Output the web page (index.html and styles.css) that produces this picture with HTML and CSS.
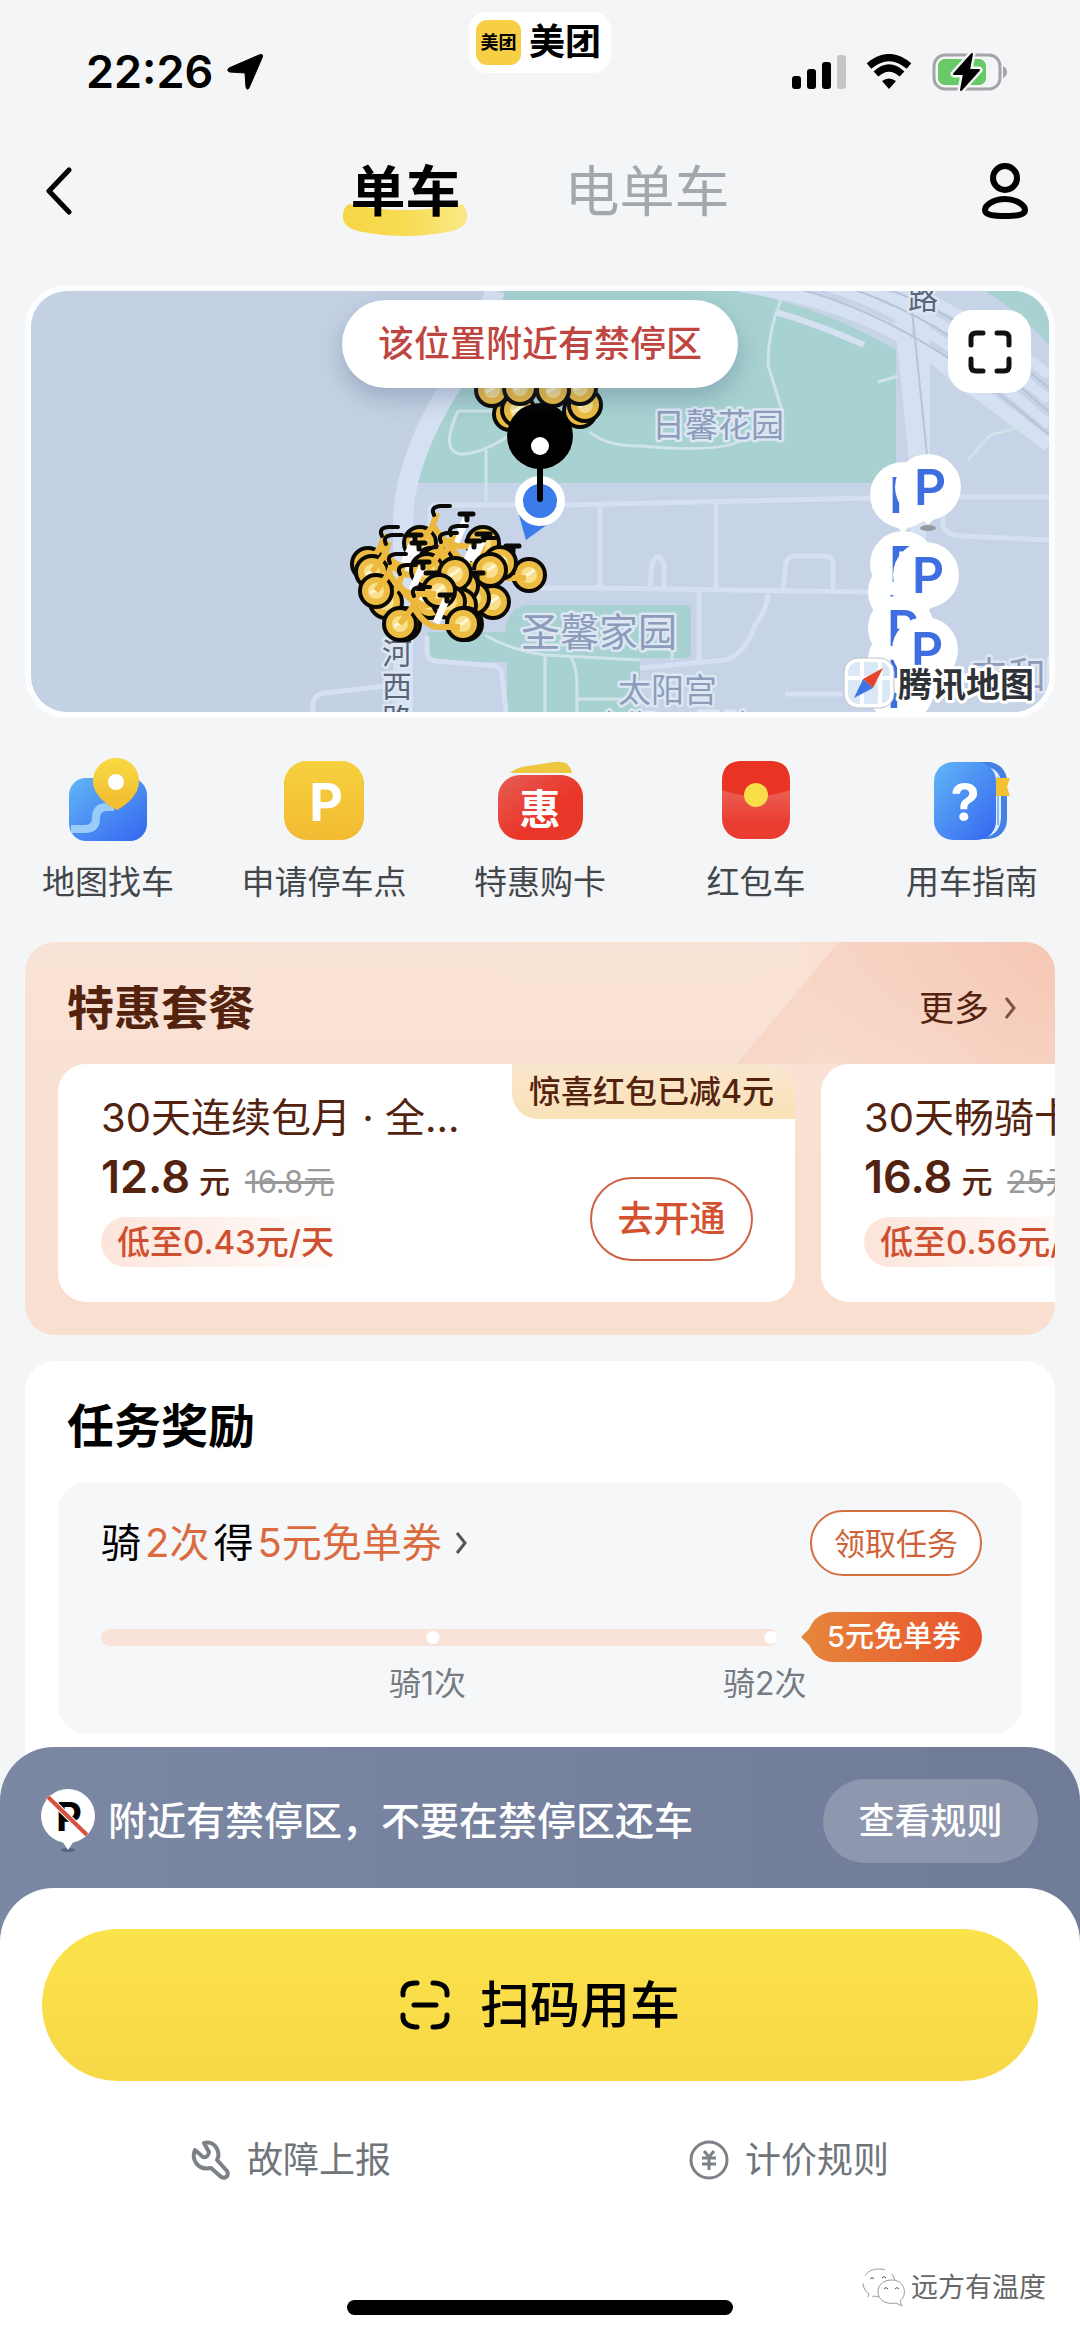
FILE: index.html
```html
<!DOCTYPE html>
<html lang="zh-CN">
<head>
  <meta charset="UTF-8">
  <meta name="viewport" content="width=device-width, initial-scale=1.0">
  <title>美团单车</title>
  <link rel="stylesheet" href="styles.css">
</head>
<body>
  <div class="app">
    <main class="scroll">

      <!-- Status bar -->
      <div class="status">
        <div class="status-left">
          <span class="time">22:26</span>
          <svg width="36" height="36" viewBox="0 0 36 36"><path d="M32 1 Q37 -1 35 4 L22 34 Q20 37 19 33 L18 19 L3 18 Q-1 17 2 14 Z" stroke="#000" stroke-linejoin="round"/></svg>
        </div>
        <div class="status-right">
          <svg width="54" height="36" viewBox="0 0 54 36">
            <rect x="0" y="22" width="9" height="13" rx="3"/>
            <rect x="15" y="15" width="9" height="20" rx="3"/>
            <rect x="30" y="8" width="9" height="27" rx="3"/>
            <rect x="45" y="1" width="9" height="34" rx="3" fill="#c4c5c7"/>
          </svg>
          <svg width="46" height="36" viewBox="0 0 46 36">
            <path d="M3 12 Q23 -5 43 12" fill="none" stroke="#000" stroke-width="7"/>
            <path d="M10 20 Q23 8 36 20" fill="none" stroke="#000" stroke-width="7"/>
            <path d="M16 27 Q23 22 30 27 L23 35 Z"/>
          </svg>
          <svg width="76" height="40" viewBox="0 0 76 40">
            <rect x="2" y="3" width="66" height="34" rx="11" fill="none" stroke="#a3a5a8" stroke-width="3"/>
            <path d="M71 14 Q75 16 75 20 Q75 24 71 26 Z" fill="#a3a5a8"/>
            <rect x="6" y="7" width="48" height="26" rx="7" fill="#67c967"/>
            <path d="M40 2 L22 22 H32 L29 38 L47 18 H37 Z" stroke="#f3f5f7" stroke-width="7" stroke-linejoin="round"/>
            <path d="M40 2 L22 22 H32 L29 38 L47 18 H37 Z" stroke="#000" stroke-width="2" stroke-linejoin="round"/>
          </svg>
        </div>
        <div class="brand"><span class="brand-icon">美团</span><span>美团</span></div>
      </div>

      <!-- Navigation -->
      <nav class="nav">
        <button class="icon-btn" aria-label="返回">
          <svg width="28" height="48" viewBox="0 0 28 48"><path d="M24 3 L4 24 L24 45" fill="none" stroke="#000" stroke-width="5" stroke-linecap="round" stroke-linejoin="round"/></svg>
        </button>
        <div class="tabs">
          <a class="tab active" href="#bike">
            <svg class="smear" width="124" height="32" viewBox="0 0 124 32">
              <defs><linearGradient id="smear" x1="0" x2="1"><stop offset="0" stop-color="#f6d647"/><stop offset="0.5" stop-color="#f7dc52"/><stop offset="1" stop-color="#fae888"/></linearGradient></defs>
              <path d="M6 0 Q62 12 119 0 Q125 6 124 15 Q122 25 104 28 Q62 36 20 28 Q2 25 0 15 Q-1 4 6 0 Z" fill="url(#smear)"/>
            </svg>
            <span>单车</span>
          </a>
          <a class="tab" href="#ebike">电单车</a>
        </div>
        <button class="icon-btn" aria-label="我的">
          <svg width="48" height="58" viewBox="0 0 48 58" fill="none" stroke="#000" stroke-width="6">
            <circle cx="24" cy="16" r="12"/>
            <path d="M24 37 C35 37 44 43 44 48 C44 53 36 54 24 54 C12 54 4 53 4 48 C4 43 13 37 24 37 Z"/>
          </svg>
        </button>
      </nav>

      <!-- Map -->
      <section class="map">
        <svg class="map-canvas" viewBox="31 291 1018 421" preserveAspectRatio="xMidYMid slice">
          <defs>
            <g id="wheel">
              <circle r="16" fill="#edbd43" stroke="#0a0906" stroke-width="4"/>
              <circle r="8" fill="#f8e08e"/>
              <path d="M-6 2 L0 -1 L5 -5" stroke="#fff6d8" stroke-width="3" fill="none"/>
            </g>
            <g id="bike">
              <use href="#wheel"/>
              <use href="#wheel" x="63"/>
              <path d="M0 0 L12 -16 L17 -30 M13 -18 Q24 2 38 3 H60" fill="none" stroke="#edb93c" stroke-width="6"/>
              <path d="M36 -1 L46 -24" stroke="#fff" stroke-width="7"/>
              <path d="M40 -29 H53 M47 -29 V-23" stroke="#0a0906" stroke-width="5" stroke-linecap="round"/>
              <path d="M14 -28 Q10 -36 20 -37 H30" stroke="#0a0906" stroke-width="4" fill="none" stroke-linecap="round"/>
            </g>
            <g id="park">
              <path d="M-8 30 L0 38 L8 30 Z" fill="#fff"/>
              <circle r="33" fill="#fff"/>
              <text class="park-text" x="2" y="18">P</text>
            </g>
          </defs>

          <rect x="31" y="291" width="1018" height="421" fill="#c4d1e3"/>
          <path d="M505 291 H1049 V712 H395 V500 Z" fill="#c7d3e6"/>

          <!-- green areas -->
          <g fill="#a7d2d1">
            <path d="M505 291 H735 Q820 305 896 350 V483 H415 Q425 430 460 390 Z"/>
            <path d="M985 291 H1049 V345 Q1020 312 985 291 Z"/>
            <path d="M428 632 H505 Q508 605 530 605 H685 Q691 605 691 612 V652 Q691 658 685 658 H640 V712 H507 V662 H436 Q428 660 428 652 Z"/>
          </g>

          <!-- roads -->
          <g fill="none" stroke="#d5e0f2">
            <path d="M495 291 Q480 340 448 390 Q405 460 403 520 V712" stroke-width="20"/>
            <path d="M899 285 L918 470 V712 M922 285 V470" stroke-width="16"/>
            <path d="M740 285 Q880 305 955 375 L1049 445" stroke-width="14"/>
            <path d="M800 280 Q910 300 1049 425 M840 280 Q940 310 1049 400 M880 280 Q960 305 1049 375" stroke-width="10"/>
            <path d="M776 312 Q820 325 864 345" stroke-width="6"/>
          </g>
          <g fill="none" stroke="#b7c3d9" stroke-width="2">
            <path d="M770 283 Q900 305 1049 435 M820 280 Q930 305 1049 412 M860 280 Q950 305 1049 388 M910 291 L927 455"/>
          </g>
          <g fill="none" stroke="#d5e0f2" stroke-width="5">
            <path d="M430 602 V510 Q430 505 436 505 H565 L870 498 M950 497 H1049"/>
            <path d="M600 507 V588 M716 504 V588 M699 592 V665 M520 588 H600 L870 592"/>
            <path d="M650 588 L652 565 Q657 548 664 565 V588 M783 590 L786 562 Q788 556 796 556 H825 Q833 556 833 564 V590"/>
            <path d="M768 594 Q766 612 755 625 Q745 655 725 660 L640 668"/>
            <path d="M943 500 V525 Q945 535 960 536 L1049 540 M313 712 V702 Q315 694 325 693 L385 686 M785 694 H850"/>
            <path d="M427 636 V652 Q427 660 436 661 L495 666 Q502 668 502 676 L506 712"/>
          </g>
          <g fill="none" stroke="#cfe3ea" stroke-width="3">
            <path d="M458 411 H520 M458 411 Q440 450 460 454 Q480 455 510 435 M486 450 V505 M590 432 Q605 446 640 446 Q740 455 750 432"/>
            <path d="M781 300 Q768 330 768 365 L782 410 M878 382 L898 376 M485 635 Q510 650 545 655 L640 660 M545 655 V712 M570 656 Q577 665 577 690 V712 M577 699 H640 M672 640 V660 M968 460 L990 435 L1020 427"/>
          </g>

          <!-- place names -->
          <g class="place">
            <text x="652" y="437" font-size="33">日馨花园</text>
            <text x="521" y="646" font-size="39">圣馨家园</text>
            <text x="618" y="702" font-size="33">太阳宫</text>
            <text x="595" y="736" font-size="30">京街 一号院</text>
            <text x="970" y="689" font-size="38">丰和园</text>
          </g>
          <g class="place road">
            <text x="908" y="309" font-size="30">路</text>
            <text x="382" y="664" font-size="30">河</text>
            <text x="382" y="697" font-size="30">西</text>
            <text x="382" y="730" font-size="30">路</text>
          </g>

          <!-- bikes -->
          <use href="#wheel" x="510" y="414"/><use href="#wheel" x="518" y="410"/>
          <use href="#wheel" x="580" y="411"/><use href="#wheel" x="585" y="405"/>
          <use href="#wheel" x="492" y="390"/><use href="#wheel" x="520" y="388"/>
          <use href="#wheel" x="580" y="388"/><use href="#wheel" x="553" y="390"/>
          <use href="#bike" x="420" y="543"/>
          <use href="#bike" x="466" y="575"/>
          <use href="#bike" x="368" y="564"/>
          <use href="#bike" x="437" y="563"/>
          <use href="#bike" x="372" y="572"/>
          <use href="#bike" x="427" y="570"/>
          <use href="#bike" x="430" y="602"/>
          <use href="#wheel" x="473" y="598"/><use href="#wheel" x="462" y="586"/>
          <use href="#wheel" x="455" y="574"/><use href="#wheel" x="460" y="605"/>
          <use href="#bike" x="386" y="602"/>
          <use href="#bike" x="376" y="591"/>
          <use href="#wheel" x="404" y="624"/><use href="#wheel" x="466" y="624"/>
          <use href="#bike" x="400" y="624"/>

          <!-- current position -->
          <path d="M519 515 L526 540 L548 524 Z" fill="#3b7bea"/>
          <circle cx="540" cy="501" r="21" fill="#3b7bea" stroke="#fff" stroke-width="8"/>
          <path d="M540 460 V499" stroke="#000" stroke-width="6" stroke-linecap="round"/>
          <circle cx="540" cy="436" r="33"/>
          <circle cx="540" cy="446" r="9" fill="#fff"/>

          <!-- parking spots -->
          <ellipse cx="928" cy="528" rx="8" ry="3" fill="#93999f"/>
          <use href="#park" x="903" y="495"/><use href="#park" x="928" y="487"/>
          <use href="#park" x="901" y="690"/><use href="#park" x="901" y="660"/>
          <use href="#park" x="901" y="592"/><use href="#park" x="901" y="628"/>
          <use href="#park" x="903" y="564"/><use href="#park" x="925" y="650"/>
          <use href="#park" x="926" y="575"/>

          <!-- map provider -->
          <rect x="846" y="660" width="46" height="46" rx="12" fill="#d9e8f4" stroke="#fff" stroke-width="4"/>
          <rect x="844" y="658" width="50" height="50" rx="14" fill="none" stroke="#b9bfc8"/>
          <path d="M862 662 V704 M848 678 H890 M880 662 V704" stroke="#fff" stroke-width="4"/>
          <path d="M883 668 L863 679 L873 688 Z" fill="#e5432c"/>
          <path d="M854 698 L863 679 L873 688 Z" fill="#3e74e4"/>
          <text class="provider" x="898" y="697">腾讯地图</text>
        </svg>
        <div class="toast">该位置附近有禁停区</div>
        <button class="expand" aria-label="展开地图">
          <svg width="46" height="46" viewBox="0 0 46 46" fill="none" stroke="#111" stroke-width="5" stroke-linecap="round">
            <path d="M4 16 V9 Q4 4 9 4 H16 M30 4 H37 Q42 4 42 9 V16 M42 30 V37 Q42 42 37 42 H30 M16 42 H9 Q4 42 4 37 V30"/>
          </svg>
        </button>
      </section>

      <!-- Shortcuts -->
      <section class="shortcuts">
        <a href="#find">
          <svg width="96" height="96" viewBox="0 0 96 96">
            <defs>
              <linearGradient id="blue" x1="0" y1="0" x2="1" y2="1"><stop offset="0" stop-color="#62b5f6"/><stop offset="1" stop-color="#3466f0"/></linearGradient>
              <linearGradient id="gold" x1="0" y1="0" x2="0" y2="1"><stop offset="0" stop-color="#f7da42"/><stop offset="1" stop-color="#f3b92f"/></linearGradient>
              <linearGradient id="red" x1="0" y1="0" x2="1" y2="1"><stop offset="0" stop-color="#e65e55"/><stop offset="0.6" stop-color="#ea3528"/><stop offset="1" stop-color="#e63a2a"/></linearGradient>
            </defs>
            <rect x="9" y="26" width="78" height="63" rx="17" fill="url(#blue)"/>
            <path d="M11 77 H25 Q36 77 36 66 Q36 55 47 55 H54" fill="none" stroke="#9accf9" stroke-width="8"/>
            <path d="M56 6 C70 6 79 17 79 29 C79 42 68 52 57 58 C45 52 33 42 33 29 C33 17 43 6 56 6 Z" fill="url(#gold)"/>
            <circle cx="56" cy="30" r="8" fill="#fff"/>
          </svg>
          <span>地图找车</span>
        </a>
        <a href="#apply">
          <svg width="96" height="96" viewBox="0 0 96 96">
            <rect x="8" y="9" width="80" height="79" rx="23" fill="#f2bd35"/>
            <rect x="8" y="9" width="80" height="77" rx="23" fill="url(#gold)" opacity="0.7"/>
            <text class="icon-letter" x="50" y="69">P</text>
          </svg>
          <span>申请停车点</span>
        </a>
        <a href="#cards">
          <svg width="96" height="96" viewBox="0 0 96 96">
            <path d="M18 21 Q22 17 30 15 L62 10 Q78 8 80 21 Z" fill="#eec63f"/>
            <rect x="6" y="23" width="85" height="65" rx="22" fill="url(#red)"/>
            <text class="icon-word" x="48" y="72">惠</text>
          </svg>
          <span>特惠购卡</span>
        </a>
        <a href="#bonus">
          <svg width="96" height="96" viewBox="0 0 96 96">
            <defs><linearGradient id="envelope" x1="0" y1="0" x2="0" y2="1"><stop offset="0.35" stop-color="#ea6055"/><stop offset="0.8" stop-color="#ea3c30"/></linearGradient></defs>
            <rect x="14" y="9" width="68" height="78" rx="20" fill="url(#envelope)"/>
            <path d="M14 38 V29 Q14 9 34 9 H62 Q82 9 82 29 V38 Q48 50 14 38 Z" fill="#e93424"/>
            <circle cx="48" cy="43" r="12" fill="#f8de49"/>
          </svg>
          <span>红包车</span>
        </a>
        <a href="#guide">
          <svg width="96" height="96" viewBox="0 0 96 96">
            <rect x="30" y="10" width="53" height="77" rx="19" fill="#4481e2"/>
            <path d="M62 14 Q78 18 77 34 V66 Q76 82 62 85 Z" fill="#dcebff"/>
            <path d="M74 25 V73" stroke="#8ab8f3" stroke-width="2"/>
            <rect x="10" y="10" width="62" height="78" rx="19" fill="url(#blue)"/>
            <path d="M72 26 H86 L83 35 L86 44 H72 Z" fill="#f3c234"/>
            <text class="icon-letter" x="41" y="69">?</text>
          </svg>
          <span>用车指南</span>
        </a>
      </section>

      <!-- Packages -->
      <section class="promo">
        <div class="promo-head">
          <h2>特惠套餐</h2>
          <a href="#more">更多
            <svg width="14" height="24" viewBox="0 0 14 24"><path d="M3 2 L11 12 L3 22" fill="none" stroke="#7a5548" stroke-width="3"/></svg>
          </a>
        </div>
        <div class="packages">
          <article class="package">
            <div class="ribbon">惊喜红包已减4元</div>
            <h3>30天连续包月 · 全...</h3>
            <p class="price"><b>12.8</b><span>元</span><del>16.8元</del></p>
            <p class="daily">低至0.43元/天</p>
            <button class="open-btn">去开通</button>
          </article>
          <article class="package">
            <h3>30天畅骑卡</h3>
            <p class="price"><b>16.8</b><span>元</span><del>25元</del></p>
            <p class="daily">低至0.56元/天</p>
          </article>
        </div>
      </section>

      <!-- Task rewards -->
      <section class="tasks">
        <h2>任务奖励</h2>
        <div class="task">
          <div class="task-row">
            <a class="task-name" href="#task">骑<em>2次</em>得<em>5元免单券</em>
              <svg width="14" height="26" viewBox="0 0 14 26"><path d="M3 3 L11 13 L3 23" fill="none" stroke="#555" stroke-width="3"/></svg>
            </a>
            <button class="claim-btn">领取任务</button>
          </div>
          <div class="task-row">
            <div class="track"><i></i><i></i></div>
            <span class="coupon">5元免单券</span>
          </div>
          <div class="steps"><span>骑1次</span><span>骑2次</span></div>
        </div>
      </section>
    </main>

    <!-- Bottom sheet -->
    <footer class="sheet">
      <div class="alert">
        <svg width="56" height="66" viewBox="0 0 56 66">
          <ellipse cx="28" cy="62" rx="7" ry="2" fill="#5a6480"/>
          <path d="M20 50 L28 62 L36 50 Z" fill="#fff"/>
          <circle cx="28" cy="28" r="27" fill="#fff"/>
          <text class="no-park" x="29" y="43">P</text>
          <path d="M8 9 L47 47" stroke="#fff" stroke-width="6"/>
          <path d="M8 9 L47 47" stroke="#d8503f" stroke-width="4"/>
        </svg>
        <p>附近有禁停区，不要在禁停区还车</p>
        <button class="rule-btn">查看规则</button>
      </div>
      <div class="panel">
        <button class="scan-btn">
          <svg width="50" height="50" viewBox="0 0 50 50" fill="none" stroke="#000" stroke-width="5" stroke-linecap="round">
            <path d="M3 15 V12 Q4 3 15 3 H17 M33 3 H35 Q46 4 47 12 V15 M47 35 V38 Q46 47 35 47 H33 M17 47 H15 Q4 46 3 38 V35 M14 25 H36"/>
          </svg>
          扫码用车
        </button>
        <div class="tools">
          <a href="#report">
            <svg width="40" height="40" viewBox="0 0 40 40" fill="none" stroke="#7c8187" stroke-width="4" stroke-linejoin="round">
              <path d="M13 3 Q22 1 26 9 Q29 15 26 20 L36 31 Q38 35 35 37 Q32 39 29 36 L20 28 Q10 30 5 23 Q1 17 4 10 L12 17 Q17 18 18 12 Z"/>
            </svg>
            故障上报
          </a>
          <a href="#pricing">
            <svg width="40" height="40" viewBox="0 0 40 40" fill="none" stroke="#7c8187" stroke-width="3">
              <circle cx="20" cy="20" r="18"/>
              <path d="M15 11 L20 17 L25 11 M13 18 H27 M13 24 H27 M20 17 V30"/>
            </svg>
            计价规则
          </a>
        </div>
        <div class="home-bar"></div>
        <div class="watermark">
          <svg width="46" height="42" viewBox="0 0 46 42" fill="#fff" stroke="#999" stroke-width="1">
            <path d="M18 2 C8 2 2 8 2 16 C2 21 5 25 8 27 L6 32 L13 29 C24 32 34 25 34 16 C34 8 28 2 18 2 Z" stroke-dasharray="16 8"/>
            <path d="M31 13 C22 13 17 18 17 25 C17 33 25 38 35 36 L41 39 L39 34 C47 28 44 13 31 13 Z"/>
            <path d="M23 22 Q25 19 27 22 M34 22 Q36 19 38 22 M9 12 Q11 9 13 12 M21 11 Q23 8 25 11" fill="none" stroke="#555"/>
          </svg>
          <span>远方有温度</span>
        </div>
      </div>
    </footer>
  </div>
</body>
</html>
```

FILE: styles.css
```css
* {
  box-sizing: border-box;
}
body {
  margin: 0;
  background: #f3f5f7;
  color: #000;
  font-family: Inter, "Noto Sans CJK SC", sans-serif;
}
h2, h3, p {
  margin: 0;
}
a {
  color: inherit;
  text-decoration: none;
}
button {
  font-family: inherit;
  line-height: 1;
  color: inherit;
  background: none;
  border: none;
  padding: 0;
  cursor: pointer;
}
svg {
  display: block;
  flex: none;
}
.app {
  display: flex;
  flex-direction: column;
  height: 100vh;
  overflow: hidden;
}
.scroll {
  flex: 1;
  min-height: 0;
  overflow: hidden;
}

/* status bar */
.status {
  position: relative;
  display: flex;
  align-items: center;
  justify-content: space-between;
  height: 144px;
  padding: 0 72px 0 86px;
}
.status-left, .status-right {
  display: flex;
  align-items: center;
}
.status-left {
  gap: 14px;
}
.status-right {
  gap: 20px;
}
.time {
  font-size: 45px;
  font-weight: 600;
  line-height: 56px;
}
.brand {
  position: absolute;
  top: 12px;
  left: 50%;
  transform: translateX(-50%);
  display: flex;
  align-items: center;
  gap: 8px;
  height: 61px;
  padding: 0 10px 0 7px;
  border-radius: 18px;
  background: #fff;
  font-size: 36px;
  font-weight: 700;
  line-height: 45px;
  white-space: nowrap;
}
.brand-icon {
  width: 45px;
  border-radius: 11px;
  background: #f6cf45;
  font-size: 18px;
  text-align: center;
}

/* navigation */
.nav {
  display: grid;
  grid-template-columns: 1fr auto 1fr;
  align-items: center;
  height: 94px;
  padding: 0 51px 0 45px;
}
.icon-btn:last-child {
  justify-self: end;
}
.tabs {
  display: flex;
  gap: 104px;
  padding-left: 6px;
  font-size: 55px;
  line-height: 72px;
}
.tab {
  position: relative;
  color: #a3a8ae;
}
.tab.active {
  color: #000;
  font-weight: 700;
}
.tab span {
  position: relative;
}
.smear {
  position: absolute;
  left: -7px;
  bottom: -9px;
}

/* map */
.map {
  position: relative;
  margin: 47px 25px 0;
  border: 6px solid #fcfdfe;
  border-radius: 42px;
  overflow: hidden;
}
.map-canvas {
  width: 100%;
  height: auto;
}
.place {
  fill: #8d9cba;
  stroke: #dde7f4;
  stroke-width: 5px;
  stroke-linejoin: round;
  paint-order: stroke;
}
.road {
  fill: #596479;
}
.park-text {
  fill: #3f6ee0;
  font-size: 50px;
  font-weight: 600;
  text-anchor: middle;
}
.provider {
  fill: #2f3237;
  stroke: #fff;
  stroke-width: 6px;
  stroke-linejoin: round;
  paint-order: stroke;
  font-size: 34px;
  font-weight: 700;
}
.toast {
  position: absolute;
  top: 9px;
  left: 50%;
  transform: translateX(-50%);
  padding: 0 36px;
  border-radius: 44px;
  background: #fff;
  box-shadow: 0 10px 24px rgba(60, 80, 120, 0.3);
  color: #bf4640;
  font-size: 36px;
  font-weight: 500;
  line-height: 88px;
  white-space: nowrap;
}
.expand {
  position: absolute;
  top: 19px;
  right: 18px;
  display: flex;
  align-items: center;
  justify-content: center;
  width: 83px;
  height: 83px;
  border-radius: 24px;
  background: #fff;
}

/* shortcuts */
.shortcuts {
  display: grid;
  grid-template-columns: repeat(5, 1fr);
  margin-top: 34px;
}
.shortcuts a {
  display: flex;
  flex-direction: column;
  align-items: center;
  gap: 14px;
  color: #43474c;
  font-size: 33px;
  line-height: 40px;
}
.icon-letter {
  fill: #fff;
  font-size: 52px;
  font-weight: 700;
  text-anchor: middle;
}
.icon-word {
  fill: #fff;
  font-size: 41px;
  font-weight: 700;
  text-anchor: middle;
}

/* packages */
.promo {
  margin: 40px 25px 0;
  padding: 36px 0 33px 33px;
  border-radius: 30px;
  background:
    linear-gradient(130deg, transparent 34%, rgba(242, 180, 155, 0.25) 34%, rgba(242, 180, 155, 0.05) 75%) top right / 380px 122px no-repeat,
    radial-gradient(circle at top right, rgba(242, 165, 140, 0.45), rgba(242, 180, 155, 0) 260px),
    linear-gradient(180deg, #f9e3d6, #f9dfcf);
  color: #54230f;
  overflow: hidden;
}
.promo-head {
  display: flex;
  align-items: center;
  justify-content: space-between;
  padding: 0 38px 0 9px;
}
.promo h2, .tasks h2 {
  font-size: 47px;
  font-weight: 700;
  line-height: 60px;
}
.promo-head a {
  display: flex;
  align-items: center;
  gap: 14px;
  font-size: 35px;
  line-height: 40px;
}
.packages {
  display: flex;
  gap: 26px;
  margin-top: 26px;
}
.package {
  position: relative;
  flex: none;
  width: 737px;
  padding: 28px 43px 35px;
  border-radius: 28px;
  background: #fff;
  overflow: hidden;
}
.package h3 {
  font-size: 40px;
  font-weight: 400;
  line-height: 52px;
}
.price {
  display: flex;
  align-items: baseline;
  gap: 9px;
  height: 55px;
  margin-top: 7px;
  font-size: 31px;
  line-height: 52px;
}
.price b {
  font-size: 45px;
  font-weight: 600;
}
.price span {
  font-weight: 500;
}
.price del {
  margin-left: 6px;
  color: #999;
}
.daily {
  width: fit-content;
  margin-top: 11px;
  padding: 0 16px;
  border-radius: 25px;
  background: linear-gradient(90deg, #fce5db, #fff);
  color: #cf5030;
  font-size: 33px;
  font-weight: 500;
  line-height: 50px;
}
.ribbon {
  position: absolute;
  top: 0;
  right: 0;
  padding: 0 21px 0 17px;
  border-bottom-left-radius: 26px;
  background: linear-gradient(180deg, #fae6cf, #f9e2b6);
  font-size: 32px;
  font-weight: 500;
  line-height: 55px;
}
.open-btn {
  position: absolute;
  right: 42px;
  bottom: 41px;
  width: 163px;
  height: 84px;
  border: 2px solid #cf6242;
  border-radius: 42px;
  color: #d3512e;
  font-size: 36px;
  font-weight: 500;
}

/* task rewards */
.tasks {
  margin: 26px 25px 0;
  padding: 35px 33px 80px;
  border-radius: 30px;
  background: #fff;
}
.tasks h2 {
  padding-left: 9px;
}
.task {
  margin-top: 26px;
  padding: 28px 40px 32px 43px;
  border-radius: 28px;
  background: #f5f7f9;
}
.task-row {
  display: flex;
  align-items: center;
  justify-content: space-between;
}
.task-row + .task-row {
  margin-top: 36px;
}
.task-name {
  display: flex;
  align-items: center;
  gap: 4px;
  font-size: 40px;
  line-height: 52px;
}
.task-name em {
  color: #db6b3f;
  font-style: normal;
}
.task-name svg {
  margin-left: 8px;
}
.claim-btn {
  width: 172px;
  height: 66px;
  border: 2px solid #d4703f;
  border-radius: 33px;
  background: #fff;
  color: #cf6238;
  font-size: 31px;
}
.track {
  display: flex;
  flex: 1;
  height: 17px;
  margin-right: 30px;
  border-radius: 9px;
  background: #f9e3d8;
}
.track i {
  flex: 1;
  background: radial-gradient(circle at calc(100% - 7px) 50%, #fff 6px, transparent 7px);
}
.coupon {
  position: relative;
  padding: 0 21px 0 19px;
  border-radius: 25px;
  background: linear-gradient(90deg, #e6853c, #e8522b);
  color: #fff;
  font-size: 29px;
  font-weight: 500;
  line-height: 50px;
}
.coupon::before {
  content: "";
  position: absolute;
  top: 15px;
  left: -7px;
  border: 10px solid transparent;
  border-left: none;
  border-right-color: #e6853c;
}
.steps {
  display: flex;
  gap: 257px;
  margin-top: 4px;
  padding-left: 288px;
  color: #777c82;
  font-size: 32px;
  line-height: 36px;
}

/* bottom sheet */
.sheet {
  position: relative;
  margin-top: -60px;
  border-radius: 54px 54px 0 0;
  background: linear-gradient(90deg, #7b88a4, #707b98);
}
.alert {
  display: flex;
  align-items: center;
  gap: 12px;
  padding: 32px 42px 25px 40px;
  color: #fff;
}
.alert p {
  flex: 1;
  font-size: 39px;
  font-weight: 500;
  line-height: 56px;
}
.rule-btn {
  width: 215px;
  height: 84px;
  border-radius: 42px;
  background: rgba(255, 255, 255, 0.2);
  font-size: 36px;
  font-weight: 500;
}
.no-park {
  font-size: 40px;
  font-weight: 700;
  text-anchor: middle;
}
.panel {
  position: relative;
  padding: 41px 42px 22px;
  border-radius: 54px 54px 0 0;
  background: #fff;
}
.scan-btn {
  display: flex;
  align-items: center;
  justify-content: center;
  gap: 30px;
  width: 100%;
  height: 152px;
  border-radius: 76px;
  background: linear-gradient(180deg, #fbe34c, #f8d746);
  font-size: 50px;
  font-weight: 500;
}
.tools {
  display: grid;
  grid-template-columns: 1fr 1fr;
  margin-top: 57px;
  color: #70757b;
  font-size: 36px;
  line-height: 44px;
}
.tools a {
  display: flex;
  align-items: center;
  justify-content: center;
  gap: 16px;
}
.home-bar {
  width: 386px;
  height: 15px;
  margin: 118px auto 0;
  border-radius: 8px;
  background: #000;
}
.watermark {
  position: absolute;
  right: 34px;
  bottom: 28px;
  display: flex;
  align-items: center;
  gap: 4px;
  color: #666;
  font-size: 27px;
  line-height: 40px;
}
```
